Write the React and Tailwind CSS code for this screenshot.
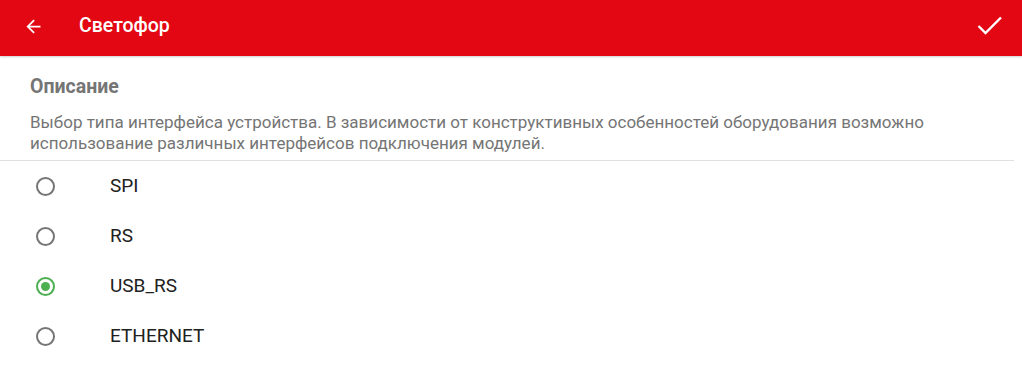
import { useState } from "react";

const options = ["SPI", "RS", "USB_RS", "ETHERNET"];

function Radio({ checked }) {
  return (
    <span
      className={
        "flex items-center justify-center w-[19px] h-[19px] rounded-full border-2 " +
        (checked ? "border-[#4caf50]" : "border-[#757575]")
      }
    >
      {checked && <span className="w-[9px] h-[9px] rounded-full bg-[#4caf50]" />}
    </span>
  );
}

export default function App() {
  const [selected, setSelected] = useState("USB_RS");

  return (
    <div className="w-[1022px] h-[372px] bg-white overflow-hidden font-['Roboto',sans-serif]">
      {/* Toolbar */}
      <header className="h-14 bg-[#e30613] flex items-center pb-1 shadow-[0_1px_2px_rgba(0,0,0,0.2)] relative">
        <button className="w-[21px] h-[21px] ml-[23px] text-white">
          <svg viewBox="0 0 24 24" width="21" height="21" fill="currentColor">
            <path d="M20 11H7.83l5.59-5.59L12 4l-8 8 8 8 1.41-1.41L7.83 13H20v-2z" />
          </svg>
        </button>
        <h1 className="ml-[35px] text-white text-[19.5px] font-medium">Светофор</h1>
        <button className="ml-auto mr-[19px] text-white">
          <svg viewBox="0 0 26 20" width="26" height="20" fill="none" stroke="currentColor" strokeWidth="2.4">
            <polyline points="1.5,10 8.5,17 24,1.5" />
          </svg>
        </button>
      </header>

      {/* Description */}
      <section className="pl-[30px] pr-4 pt-[21px] pb-[6px] border-b border-[#e0e0e0] mr-2">
        <h2 className="text-[19.5px] font-bold text-[#757575] leading-5">Описание</h2>
        <p className="mt-[15px] text-[17px] leading-[21px] text-[#757575]">
          Выбор типа интерфейса устройства. В зависимости от конструктивных особенностей оборудования возможно
          использование различных интерфейсов подключения модулей.
        </p>
      </section>

      {/* Options */}
      <ul>
        {options.map((o) => (
          <li
            key={o}
            onClick={() => setSelected(o)}
            className="h-[50px] flex items-center cursor-pointer"
          >
            <span className="ml-[36px] w-[19px]">
              <Radio checked={selected === o} />
            </span>
            <span className="ml-[55px] text-[19px] text-[#212121]">{o}</span>
          </li>
        ))}
      </ul>
    </div>
  );
}
